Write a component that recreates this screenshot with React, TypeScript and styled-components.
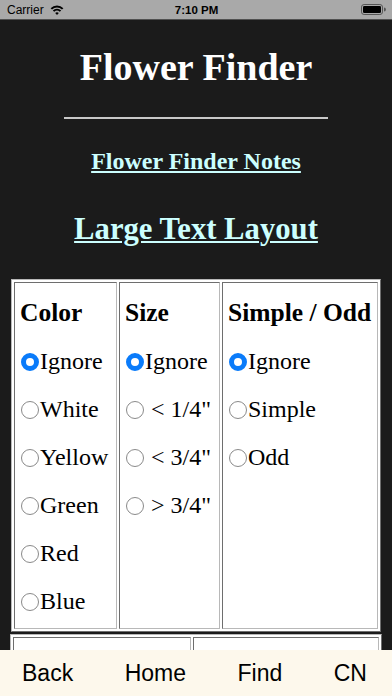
import React from "react";
import styled, { createGlobalStyle } from "styled-components";

const Global = createGlobalStyle`
  html, body { margin: 0; padding: 0; }
  body { background: #1b1b1b; overflow: hidden; }
  * { box-sizing: border-box; }
`;

const Screen = styled.div`
  width: 392px;
  height: 696px;
  display: flex;
  flex-direction: column;
  background: #1b1b1b;
  overflow: hidden;
`;

const StatusBar = styled.div`
  height: 20px;
  flex: none;
  background: #a9a9a9;
  border-bottom: 1px solid #505050;
  display: grid;
  grid-template-columns: 1fr auto 1fr;
  align-items: center;
  padding: 0 6px 0 7px;
  font-family: "Liberation Sans", Arial, sans-serif;
  font-size: 12px;
  color: #000;
`;

const Carrier = styled.div`
  display: flex;
  align-items: center;
  gap: 6px;
`;

const Clock = styled.div`
  font-weight: 700;
  font-size: 11.5px;
`;

const BatteryWrap = styled.div`
  justify-self: end;
  display: flex;
  align-items: center;
`;

const Main = styled.div`
  flex: 1;
  min-height: 0;
  overflow: hidden;
  display: flex;
  flex-direction: column;
  align-items: center;
  padding-top: 28px;
  font-family: "Liberation Serif", "Times New Roman", serif;
  & > * { flex: none; }
`;

const Title = styled.h1`
  margin: 0;
  font-size: 38px;
  line-height: 38px;
  font-weight: 700;
  color: #ffffff;
  text-align: center;
`;

const Rule = styled.div`
  width: 264px;
  height: 2px;
  background: #c8c8c8;
  margin-top: 31px;
`;

const NavLink = styled.a<{ $size: number; $gap: number }>`
  display: block;
  margin-top: ${(p) => p.$gap}px;
  font-size: ${(p) => p.$size}px;
  line-height: ${(p) => p.$size}px;
  font-weight: 700;
  color: #ccffff;
  text-decoration: underline;
  text-decoration-thickness: 2px;
  text-underline-offset: 2px;
  cursor: pointer;
`;

const Table = styled.div<{ $cols: string; $gap: number }>`
  margin-top: ${(p) => p.$gap}px;
  display: grid;
  grid-template-columns: ${(p) => p.$cols};
  gap: 2px;
  padding: 2px;
  background: #ffffff;
  border: 1px solid;
  border-color: #b8b8b8 #6e6e6e #6e6e6e #b8b8b8;
`;

const Cell = styled.div<{ $min?: number }>`
  border: 1px solid;
  border-color: #6e6e6e #b8b8b8 #b8b8b8 #6e6e6e;
  padding: 17px 5px 15px 5px;
  min-height: ${(p) => p.$min ?? 0}px;
  display: flex;
  flex-direction: column;
  gap: 24px;
  color: #000;
`;

const Heading = styled.div`
  font-size: 25.5px;
  line-height: 25.5px;
  font-weight: 700;
  white-space: nowrap;
`;

const Option = styled.label`
  display: block;
  font-size: 24px;
  line-height: 24px;
  white-space: pre;
`;

const Radio = styled.span<{ $on?: boolean }>`
  display: inline-block;
  width: 18px;
  height: 18px;
  margin: 0 1px 0 1px;
  vertical-align: -2px;
  border-radius: 50%;
  background: #ffffff;
  border: ${(p) => (p.$on ? "5.5px solid #0a7bfa" : "1px solid #8a8a8a")};
`;

const BottomBar = styled.div`
  height: 46px;
  flex: none;
  background: #fdf8ec;
  display: flex;
  align-items: center;
  justify-content: space-between;
  padding: 0 25px 0 22px;
  font-family: "Liberation Sans", Arial, sans-serif;
  font-size: 23px;
  line-height: 23px;
  color: #000;
`;

const BarButton = styled.span``;

const Wifi = () => (
  <svg width="14" height="10" viewBox="0 0 14 10">
    <path d="M1.3 3.9 A8 8 0 0 1 12.7 3.9" fill="none" stroke="#000" strokeWidth="2" />
    <path d="M3.5 6.1 A5 5 0 0 1 10.5 6.1" fill="none" stroke="#000" strokeWidth="2" />
    <path d="M7 10 L5.2 8.1 A2.6 2.6 0 0 1 8.8 8.1 Z" fill="#000" />
  </svg>
);

const Battery = () => (
  <svg width="25" height="11" viewBox="0 0 25 11">
    <rect x="0.5" y="0.5" width="21" height="10" rx="2.6" fill="none" stroke="#555" />
    <rect x="2" y="2" width="18" height="7" rx="1.3" fill="#000" />
    <path d="M23 3.6 a1.6 1.6 0 0 1 0 3.8 Z" fill="#555" />
  </svg>
);

type Col = { title: string; options: string[] };

const tableCols: Col[] = [
  { title: "Color", options: ["Ignore", "White", "Yellow", "Green", "Red", "Blue"] },
  { title: "Size", options: ["Ignore", " < 1/4\"", " < 3/4\"", " > 3/4\""] },
  { title: "Simple / Odd", options: ["Ignore", "Simple", "Odd"] },
];

export default function App() {
  return (
    <Screen>
      <Global />
      <StatusBar>
        <Carrier>
          <span>Carrier</span>
          <Wifi />
        </Carrier>
        <Clock>7:10 PM</Clock>
        <BatteryWrap>
          <Battery />
        </BatteryWrap>
      </StatusBar>
      <Main>
        <Title>Flower Finder</Title>
        <Rule />
        <NavLink $size={24} $gap={30}>Flower Finder Notes</NavLink>
        <NavLink $size={30.7} $gap={40.5}>Large Text Layout</NavLink>
        <Table $cols="103px 101px 156px" $gap={34.7}>
          {tableCols.map((c) => (
            <Cell key={c.title}>
              <Heading>{c.title}</Heading>
              {c.options.map((o, i) => (
                <Option key={o}>
                  <Radio $on={i === 0} />
                  {o}
                </Option>
              ))}
            </Cell>
          ))}
        </Table>
        <Table $cols="178px 186px" $gap={2}>
          <Cell $min={120} />
          <Cell $min={120} />
        </Table>
      </Main>
      <BottomBar>
        <BarButton>Back</BarButton>
        <BarButton>Home</BarButton>
        <BarButton>Find</BarButton>
        <BarButton>CN</BarButton>
      </BottomBar>
    </Screen>
  );
}
